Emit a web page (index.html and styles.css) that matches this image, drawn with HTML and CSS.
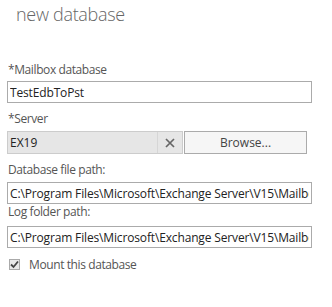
FILE: index.html
```html
<!DOCTYPE html>
<html lang="en">
<head>
  <meta charset="UTF-8" />
  <title>new database</title>
  <link rel="stylesheet" href="styles.css">
</head>
<body>
  <h1 class="title">new database</h1>

  <div class="form">
    <div class="field field-first">
      <label class="field-label">*Mailbox database</label>
      <input class="text-box" type="text" value="TestEdbToPst" readonly>
    </div>

    <div class="field field-server">
      <label class="field-label">*Server</label>
      <div class="server-row">
        <div class="picker-box">
          <span class="picker-value">EX19</span>
          <span class="picker-clear">
            <svg width="10" height="10" viewBox="0 0 10 10">
              <path d="M1 1 L9 9 M9 1 L1 9" stroke="#666" stroke-width="1.7" fill="none"/>
            </svg>
          </span>
        </div>
        <div class="browse-button">Browse...</div>
      </div>
    </div>

    <div class="field field-path">
      <label class="field-label">Database file path:</label>
      <input class="text-box" type="text" value="C:\Program Files\Microsoft\Exchange Server\V15\Mailbox\TestEdbToPst\TestEdbToPst.edb" readonly>
    </div>

    <div class="field field-log">
      <label class="field-label">Log folder path:</label>
      <input class="text-box" type="text" value="C:\Program Files\Microsoft\Exchange Server\V15\Mailbox\TestEdbToPst" readonly>
    </div>

    <div class="check-row">
      <span class="check-box">
        <svg width="9" height="9" viewBox="0 0 9 9">
          <path d="M1 4.5 L3.5 7 L8 1.5" stroke="#444" stroke-width="1.8" fill="none"/>
        </svg>
      </span>
      <span class="check-label">Mount this database</span>
    </div>
  </div>
</body>
</html>
```

FILE: styles.css
```css
body {
  margin: 0;
  background: #ffffff;
  font-family: "Open Sans", "Noto Sans", sans-serif;
  color: #333333;
}
.title {
  margin: 0;
  padding: 1px 0 0 16px;
  font-size: 18px;
  font-weight: 300;
  letter-spacing: -0.3px;
  color: #666666;
  line-height: 26px;
}
.form {
  padding: 0 20px 0 7px;
}
.field-first {
  margin-top: 35px;
}
.field-server {
  margin-top: 8px;
}
.field-path {
  margin-top: 8px;
}
.field-log {
  margin-top: 0;
}
.field-label {
  display: block;
  font-size: 12px;
  letter-spacing: -0.4px;
  line-height: 16px;
  margin: 0 0 4px 1px;
  color: #555555;
}
.field-first .field-label {
  margin-bottom: 3px;
}
.field-log .field-label {
  margin-bottom: 6px;
}
.text-box {
  display: block;
  width: 100%;
  height: 22px;
  box-sizing: border-box;
  margin: 0;
  border: 1px solid #ababab;
  border-radius: 0;
  padding: 0 2px;
  font-family: "Open Sans", "Noto Sans", sans-serif;
  font-size: 12px;
  letter-spacing: -0.15px;
  line-height: 20px;
  color: #222222;
  background: #ffffff;
  outline: none;
}
.server-row {
  display: flex;
  gap: 1px;
}
.picker-box {
  display: flex;
  width: 176px;
  height: 23px;
  background: #e6e6e6;
  border: 1px solid #cccccc;
  box-sizing: border-box;
}
.picker-value {
  flex: 1;
  padding-left: 2px;
  font-size: 12px;
  line-height: 21px;
  color: #222222;
}
.picker-clear {
  width: 24px;
  display: flex;
  align-items: center;
  justify-content: center;
  border-left: 1px solid #d6d6d6;
}
.browse-button {
  width: 123px;
  height: 23px;
  box-sizing: border-box;
  border: 1px solid #ababab;
  background: #f6f6f6;
  font-size: 12px;
  line-height: 21px;
  text-align: center;
  color: #444444;
}
.check-row {
  display: flex;
  align-items: center;
  gap: 9px;
  margin-top: 8px;
  padding-left: 2px;
}
.check-box {
  width: 11px;
  height: 11px;
  box-sizing: border-box;
  border: 1px solid #aaaaaa;
  background: #e8e8e8;
  display: flex;
  align-items: center;
  justify-content: center;
}
.check-label {
  font-size: 12px;
  letter-spacing: -0.4px;
  color: #555555;
}
```
